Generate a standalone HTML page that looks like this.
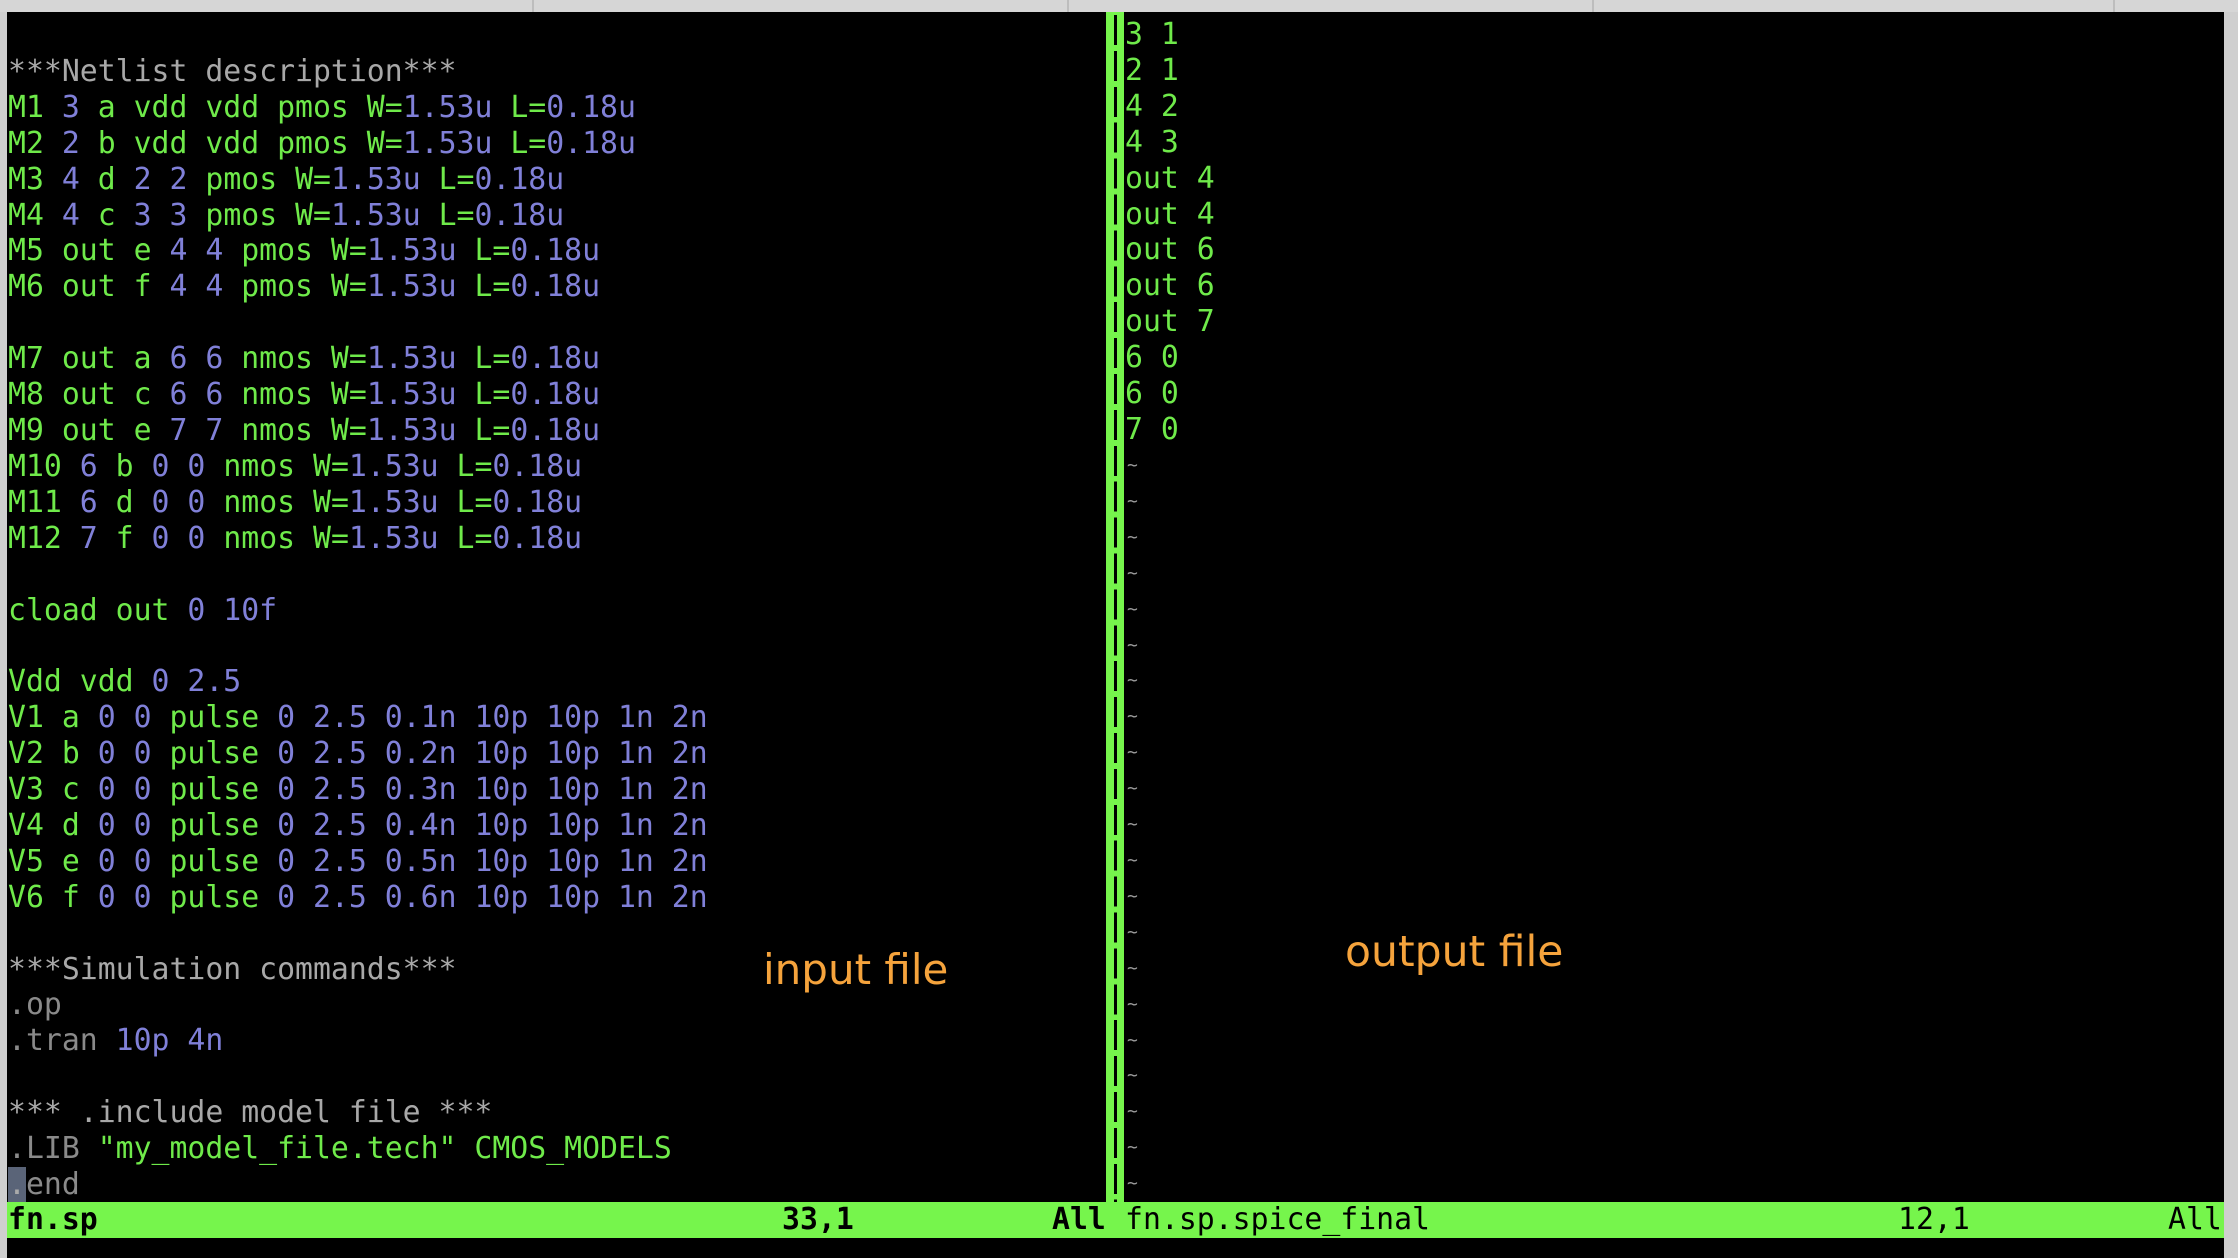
<!DOCTYPE html>
<html><head><meta charset="utf-8"><style>
html,body{margin:0;padding:0;}
body{width:2238px;height:1258px;background:#000;position:relative;overflow:hidden;font-family:"DejaVu Sans Mono","Liberation Mono",monospace;}
.top{position:absolute;left:0;top:0;width:2238px;height:12px;background:#d6d6d6;}
.top i{position:absolute;top:0;width:2px;height:12px;background:#bdbdbd;}
.lb{position:absolute;left:0;top:12px;width:7px;height:1246px;background:#cfcfcf;}
.rb{position:absolute;left:2224px;top:12px;width:14px;height:1246px;background:#cfcfcf;}
pre{position:absolute;margin:0;font-size:29.8px;line-height:35.9px;color:#6fea4a;white-space:pre;}
.b{color:#8080d8}.c{color:#a8a8a8}.d{color:#8a8a8a}
.t{color:#9a9a9a;font-size:16px;}
.sep{position:absolute;left:1106px;top:12px;width:18px;height:1190px;background:#76f54c;}
.sep:after{content:"";position:absolute;left:8px;top:3px;width:3px;height:100%;background:repeating-linear-gradient(#000 0 30px,transparent 30px 35.9px);}
.st{position:absolute;top:1202px;height:36px;background:#76f54c;color:#000;font-size:29.8px;line-height:36px;font-weight:bold;}
.st span{position:absolute;top:0;}
.lab{position:absolute;font-family:"DejaVu Sans","Liberation Sans",sans-serif;color:#f5a33c;}
.cur{background:#5a6478;color:#aaa;}
</style></head><body>
<div class="top"><i style="left:532px"></i><i style="left:1067px"></i><i style="left:1592px"></i><i style="left:2113px"></i></div>
<div class="lb"></div><div class="rb"></div>
<pre style="left:8px;top:18px">

<span class="c">***Netlist description***</span>
M1 <span class="b">3</span> a vdd vdd pmos W=<span class="b">1.53u</span> L=<span class="b">0.18u</span>
M2 <span class="b">2</span> b vdd vdd pmos W=<span class="b">1.53u</span> L=<span class="b">0.18u</span>
M3 <span class="b">4</span> d <span class="b">2 2</span> pmos W=<span class="b">1.53u</span> L=<span class="b">0.18u</span>
M4 <span class="b">4</span> c <span class="b">3 3</span> pmos W=<span class="b">1.53u</span> L=<span class="b">0.18u</span>
M5 out e <span class="b">4 4</span> pmos W=<span class="b">1.53u</span> L=<span class="b">0.18u</span>
M6 out f <span class="b">4 4</span> pmos W=<span class="b">1.53u</span> L=<span class="b">0.18u</span>

M7 out a <span class="b">6 6</span> nmos W=<span class="b">1.53u</span> L=<span class="b">0.18u</span>
M8 out c <span class="b">6 6</span> nmos W=<span class="b">1.53u</span> L=<span class="b">0.18u</span>
M9 out e <span class="b">7 7</span> nmos W=<span class="b">1.53u</span> L=<span class="b">0.18u</span>
M10 <span class="b">6</span> b <span class="b">0 0</span> nmos W=<span class="b">1.53u</span> L=<span class="b">0.18u</span>
M11 <span class="b">6</span> d <span class="b">0 0</span> nmos W=<span class="b">1.53u</span> L=<span class="b">0.18u</span>
M12 <span class="b">7</span> f <span class="b">0 0</span> nmos W=<span class="b">1.53u</span> L=<span class="b">0.18u</span>

cload out <span class="b">0 10f</span>

Vdd vdd <span class="b">0 2.5</span>
V1 a <span class="b">0 0</span> pulse <span class="b">0 2.5 0.1n 10p 10p 1n 2n</span>
V2 b <span class="b">0 0</span> pulse <span class="b">0 2.5 0.2n 10p 10p 1n 2n</span>
V3 c <span class="b">0 0</span> pulse <span class="b">0 2.5 0.3n 10p 10p 1n 2n</span>
V4 d <span class="b">0 0</span> pulse <span class="b">0 2.5 0.4n 10p 10p 1n 2n</span>
V5 e <span class="b">0 0</span> pulse <span class="b">0 2.5 0.5n 10p 10p 1n 2n</span>
V6 f <span class="b">0 0</span> pulse <span class="b">0 2.5 0.6n 10p 10p 1n 2n</span>

<span class="c">***Simulation commands***</span>
<span class="d">.op</span>
<span class="d">.tran</span> <span class="b">10p 4n</span>

<span class="c">*** .include model file ***</span>
<span class="d">.LIB</span> "my_model_file.tech" CMOS_MODELS
<span class="cur">.</span><span class="d">end</span></pre>
<div class="sep"></div>
<pre style="left:1125px;top:17px">3 1
2 1
4 2
4 3
out 4
out 4
out 6
out 6
out 7
6 0
6 0
7 0</pre>
<pre class="t" style="left:1127px;top:448px;line-height:35.9px;font-size:18px">~
~
~
~
~
~
~
~
~
~
~
~
~
~
~
~
~
~
~
~
~</pre>
<div class="st" style="left:7px;width:1099px"><span style="left:1px">fn.sp</span><span style="left:775px">33,1</span><span style="left:1045px">All</span></div>
<div class="st" style="left:1106px;width:1118px"><span style="left:19px;font-weight:normal">fn.sp.spice_final</span><span style="left:792px;font-weight:normal">12,1</span><span style="left:1062px;font-weight:normal">All</span></div>
<div class="lab" style="left:763px;top:945px;font-size:42px">input file</div>
<div class="lab" style="left:1345px;top:928px;font-size:42.5px">output file</div>
</body></html>
